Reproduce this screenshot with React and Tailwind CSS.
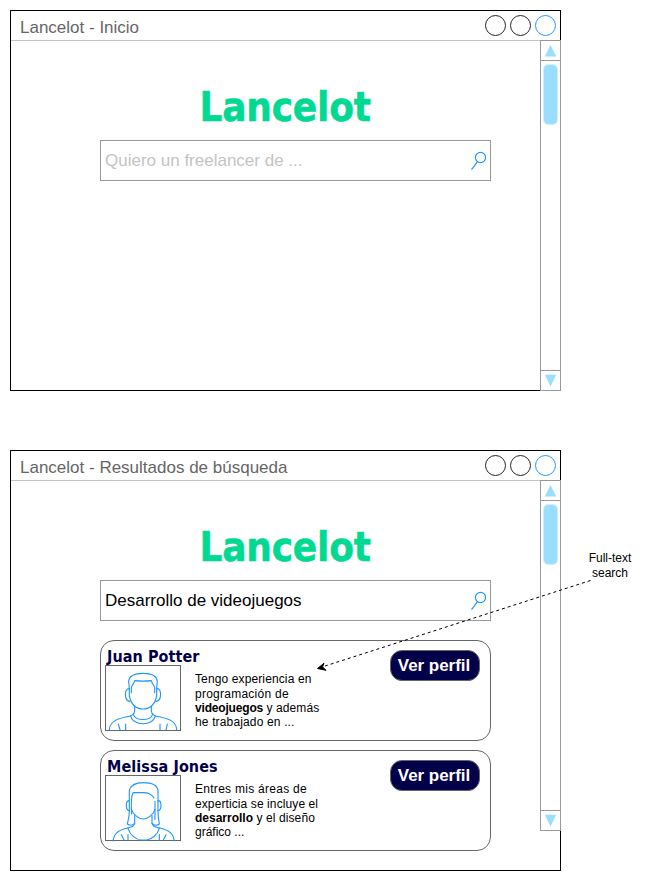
const stroke = { fill: 'none', stroke: '#2196ff', strokeWidth: 3.4, strokeLinecap: 'round', strokeLinejoin: 'round' };

function ManAvatar() {
  return (
    <svg viewBox="6 6 222 192" className="block h-[64px] w-[74px]" {...stroke}>
      <path d="M76 74 L74 52 C76 34 94 28 117 28 C140 28 158 34 160 52 L158 74" />
      <path d="M76 74 C60 72 60 111 78 112 M158 74 C174 72 174 111 156 112 M76 74 V98 M158 74 V98" />
      <path d="M82 86 V72 C82 64 89 62 92 50 Q117 53 142 50 C145 62 152 64 152 72 V86" />
      <path d="M77 98 C80 121 97 135 117 135 C137 135 154 121 157 98" />
      <path d="M92 127 V142 C92 150 86 152 80 156 M142 127 V142 C142 150 148 152 154 156" />
      <path d="M88 150 C92 172 142 172 146 150" />
      <path d="M80 156 C86 187 148 187 154 156" />
      <path d="M80 156 C40 163 16 172 16 198 M154 156 C194 163 218 172 218 198" />
      <path d="M43 180 L48 198 M65 180 V198 M190 180 L186 198 M168 180 V198" />
    </svg>
  );
}

function WomanAvatar() {
  return (
    <svg viewBox="6 6 222 192" className="block h-[64px] w-[74px] overflow-visible" {...stroke}>
      <path d="M76 84 V50 C80 32 98 26 118 26 C138 26 160 32 162 50 V84" />
      <path d="M76 80 C64 80 64 108 76 110 M162 80 C174 80 174 108 162 110" />
      <path d="M76 84 V112 C76 130 72 140 70 150 C78 156 86 154 92 148 M162 84 V112 C162 130 164 140 166 150 C158 156 150 154 144 148" />
      <path d="M83 120 C81 90 81 68 87 56 H118 C134 56 144 62 150 72 M153 82 V136" />
      <path d="M82 106 C88 122 104 135 118 135 C132 135 148 122 153 106" />
      <path d="M92 125 V148 C90 156 82 160 72 162 M144 125 V148 C146 156 156 160 166 162" />
      <path d="M72 163 C78 184 98 197 110 198 H128 C142 196 160 184 166 163" />
      <path d="M72 162 C40 168 28 180 28 201 M166 162 C198 168 210 180 210 201" />
      <path d="M52 182 L60 198 M72 182 V198 M186 182 L178 198 M166 182 V198" />
    </svg>
  );
}

function Scrollbar() {
  return (
    <div className="-mt-px -mr-px flex h-[351px] w-[21px] shrink-0 flex-col border border-[#999999] bg-white">
      <div className="h-5 border-b border-[#999999]">
        <svg viewBox="0 0 19 19" className="block h-[19px] w-[19px]">
          <path d="M9.5 4 L15.2 15.5 H3.8 Z" fill="#99ddff" />
        </svg>
      </div>
      <div className="mx-auto mt-[3px] h-[61px] w-[15px] rounded-[5px] border border-[#ccefff] bg-[#99ddff] bg-clip-padding" />
      <div className="mt-auto h-5 border-t border-[#999999]">
        <svg viewBox="0 0 19 19" className="block h-[19px] w-[19px]">
          <path d="M9.5 15.5 L15.2 3.8 H3.8 Z" fill="#99ddff" />
        </svg>
      </div>
    </div>
  );
}

function SearchBox({ text, placeholder }) {
  return (
    <div className="mt-[10px] flex h-[41px] w-[391px] items-center justify-between border border-[#999999] pr-1 pl-1 text-[17px]">
      <span className={placeholder ? 'text-[#c4c4c4]' : 'text-black'}>{text}</span>
      <svg viewBox="0 0 16 20" className="h-5 w-4" fill="none" stroke="#2196ff" strokeWidth="1.2">
        <circle cx="10.5" cy="6.5" r="5.1" />
        <path d="M7.6 10.7 L1.5 18.7" />
      </svg>
    </div>
  );
}

function Window({ title, className, children }) {
  return (
    <section className={`flex w-[551px] flex-col border border-black bg-white ${className}`}>
      <header className="flex h-[30px] shrink-0 items-center justify-between border-b border-[#c4c4c4] pr-1 pl-[9px]">
        <h2 className="mt-[5px] text-[17px] text-[#666666]">{title}</h2>
        <div className="flex gap-1">
          <span className="size-[21px] rounded-full border border-[#222222]" />
          <span className="size-[21px] rounded-full border border-[#222222]" />
          <span className="size-[21px] rounded-full border border-[#2196ff]" />
        </div>
      </header>
      <div className="flex flex-1 justify-between">
        <main className="ml-[89px] w-[391px]">
          <h1 className="mt-[41px] h-12 pl-[99.5px] font-['DejaVu_Sans_Condensed','DejaVu_Sans',sans-serif] text-[40px] leading-[50px] font-bold tracking-[-0.2px] whitespace-nowrap text-[#00d991] [-webkit-text-stroke:0.5px_#00d991] [font-stretch:condensed]">
            Lancelot
          </h1>
          {children}
        </main>
        <Scrollbar />
      </div>
    </section>
  );
}

function ResultCard({ name, avatar, children }) {
  return (
    <article className="flex h-[101px] w-[391px] justify-between rounded-[14px] border border-[#666666] pr-[10px] pl-1">
      <div>
        <h3 className="ml-[2px] h-6 pt-[6px] font-['DejaVu_Sans_Condensed','DejaVu_Sans',sans-serif] text-[16px] leading-5 font-bold tracking-[0.08px] whitespace-nowrap text-[#03004a] [font-stretch:condensed]">
          {name}
        </h3>
        <div className="flex">
          <div className="h-[66px] w-[76px] border border-[#666666]">{avatar}</div>
          <p className="mt-[7.2px] ml-[14px] text-[12px] leading-[14.4px] whitespace-nowrap text-black">{children}</p>
        </div>
      </div>
      <button className="mt-[9px] h-[31px] w-[90px] rounded-[12px] border border-[#666666] bg-[#03004a] pr-[2px] text-[17px] leading-none font-bold tracking-[-0.05px] whitespace-nowrap text-white">
        Ver perfil
      </button>
    </article>
  );
}

export default function App() {
  return (
    <div className="relative h-[881px] w-[651px] overflow-hidden bg-white pt-[10px] pl-[10px] font-['Liberation_Sans',Arial,sans-serif]">
      <Window title="Lancelot - Inicio" className="h-[381px]">
        <SearchBox text="Quiero un freelancer de ..." placeholder />
      </Window>
      <div className="mt-[59px] flex">
        <Window title="Lancelot - Resultados de búsqueda" className="h-[421px]">
          <SearchBox text="Desarrollo de videojuegos" />
          <div className="mt-[19px] flex flex-col gap-[9px]">
            <ResultCard name="Juan Potter" avatar={<ManAvatar />}>
              <span className="tracking-[0.12px]">Tengo experiencia en</span><br />
              <span className="tracking-[0.25px]">programación de</span><br />
              <b className="tracking-[-0.18px]">videojuegos</b><span className="tracking-[0.1px]"> y además</span><br />
              <span className="tracking-[0.15px]">he trabajado en ...</span>
            </ResultCard>
            <ResultCard name="Melissa Jones" avatar={<WomanAvatar />}>
              <span className="tracking-[0.28px]">Entres mis áreas de</span><br />
              <span className="tracking-[0.1px]">experticia se incluye el</span><br />
              <b>desarrollo</b><span className="tracking-[0.1px]"> y el diseño</span><br />
              gráfico ...
            </ResultCard>
          </div>
        </Window>
        <p className="mt-[101.2px] ml-[24px] w-[50px] text-center text-[12px] leading-[14.4px] whitespace-nowrap text-black">
          Full-text<br />search
        </p>
      </div>
      <svg viewBox="0 0 651 881" className="pointer-events-none absolute inset-0 h-[881px] w-[651px]">
        <path d="M590.5 580.5 L322 667" fill="none" stroke="#000" strokeDasharray="3 3" />
        <path d="M317.5 668.5 L324 663.2 L322.6 666.9 L326 670.3 Z" fill="#000" stroke="#000" />
      </svg>
    </div>
  );
}
